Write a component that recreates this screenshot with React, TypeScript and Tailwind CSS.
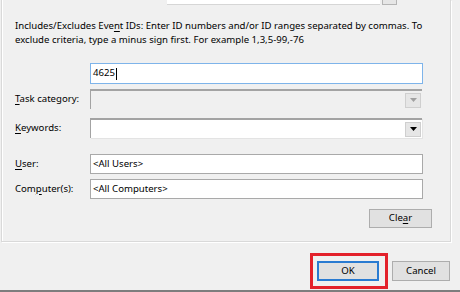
const FONT = "font-['Noto_Sans',sans-serif] text-[9.6px] text-black"

function Key({ children }: { children: string }) {
  return <span className="underline underline-offset-[1.5px]">{children}</span>
}

function Arrow({ disabled }: { disabled?: boolean }) {
  return (
    <div className="flex h-[15px] w-[16px] items-center justify-center border border-[#cfcfcf] bg-[#e6e6e6]">
      <svg width="7" height="4" viewBox="0 0 7 4">
        <path d="M0 0h7L3.5 4z" fill={disabled ? '#a0a0a0' : '#000'} />
      </svg>
    </div>
  )
}

export default function App() {
  return (
    <div className={`flex h-[292px] w-[460px] flex-col overflow-hidden bg-[#f0f0f0] ${FONT}`}>
      <div className="ml-[1px] h-[242px] w-[450px] border-x border-b border-[#d9d9d9] pl-[13px] shadow-[1px_1px_0_#fff,inset_1px_0_0_#fff]">
        <div className="ml-[152px] flex h-[5px]">
          <div className="w-[213px] border-b border-[#d6d6d6] bg-white" />
          <div className="ml-[2px] w-[15px] border-x border-b border-[#b5b5b5] bg-[#e6e6e6]" />
        </div>

        <p className="mt-[14px] whitespace-nowrap leading-[14px]">
          Includes/Excludes Eve<Key>n</Key>t IDs: Enter ID numbers and/or ID ranges separated by commas. To
          <br />
          exclude criteria, type a minus sign first. For example 1,3,5-99,-76
        </p>

        <div className="mt-[16px] flex items-center">
          <div className="w-[75px]" />
          <div className="flex h-[21px] w-[333px] items-center border border-[#7eb4ea] bg-white pl-[2px]">
            4625<span className="ml-[1px] h-[12px] w-[1px] bg-black" />
          </div>
        </div>

        <div className="mt-[5px] flex items-center">
          <div className="w-[75px]">
            <Key>T</Key>ask category:
          </div>
          <div className="flex h-[20px] w-[332px] items-center justify-end border-t-2 border-l border-[#a3a3a3] border-b-white border-r-white bg-[#f0f0f0] pr-[1px]">
            <Arrow disabled />
          </div>
        </div>

        <div className="mt-[9px] flex items-center">
          <div className="w-[75px]">
            <Key>K</Key>eywords:
          </div>
          <div className="flex h-[20px] w-[332px] items-center justify-end border-t-2 border-l border-[#a3a3a3] bg-white pr-[1px] shadow-[1px_1px_0_#e3e3e3]">
            <Arrow />
          </div>
        </div>

        <div className="mt-[16px] flex items-center">
          <div className="w-[75px]">
            <Key>U</Key>ser:
          </div>
          <div className="flex h-[20px] w-[333px] items-center border border-[#a9a9a9] bg-white pl-[2px]">
            &lt;All Users&gt;
          </div>
        </div>

        <div className="mt-[5px] flex items-center">
          <div className="w-[75px]">
            Com<Key>p</Key>uter(s):
          </div>
          <div className="flex h-[20px] w-[333px] items-center border border-[#a9a9a9] bg-white pl-[2px]">
            &lt;All Computers&gt;
          </div>
        </div>

        <div className="mt-[10px] ml-[354px] flex h-[19px] w-[63px] items-center justify-center border border-[#adadad] bg-[#e1e1e1]">
          Cle<Key>a</Key>r
        </div>
      </div>

      <div className="mt-[11px] flex items-start">
        <div className="ml-[310px] h-[36px] w-[78px] border-[3px] border-[#e3212b] pl-[4px] pt-[5px]">
          <div className="flex h-[20px] w-[62px] items-center justify-center border-2 border-[#2a7bd1] bg-[#e1e1e1]">
            OK
          </div>
        </div>
        <div className="ml-[4px] mt-[8px] flex h-[20px] w-[58px] items-center justify-center border border-[#adadad] bg-[#e1e1e1]">
          Cancel
        </div>
      </div>

      <div className="mt-auto h-[2px] bg-[#7d7d7d]" />
    </div>
  )
}
